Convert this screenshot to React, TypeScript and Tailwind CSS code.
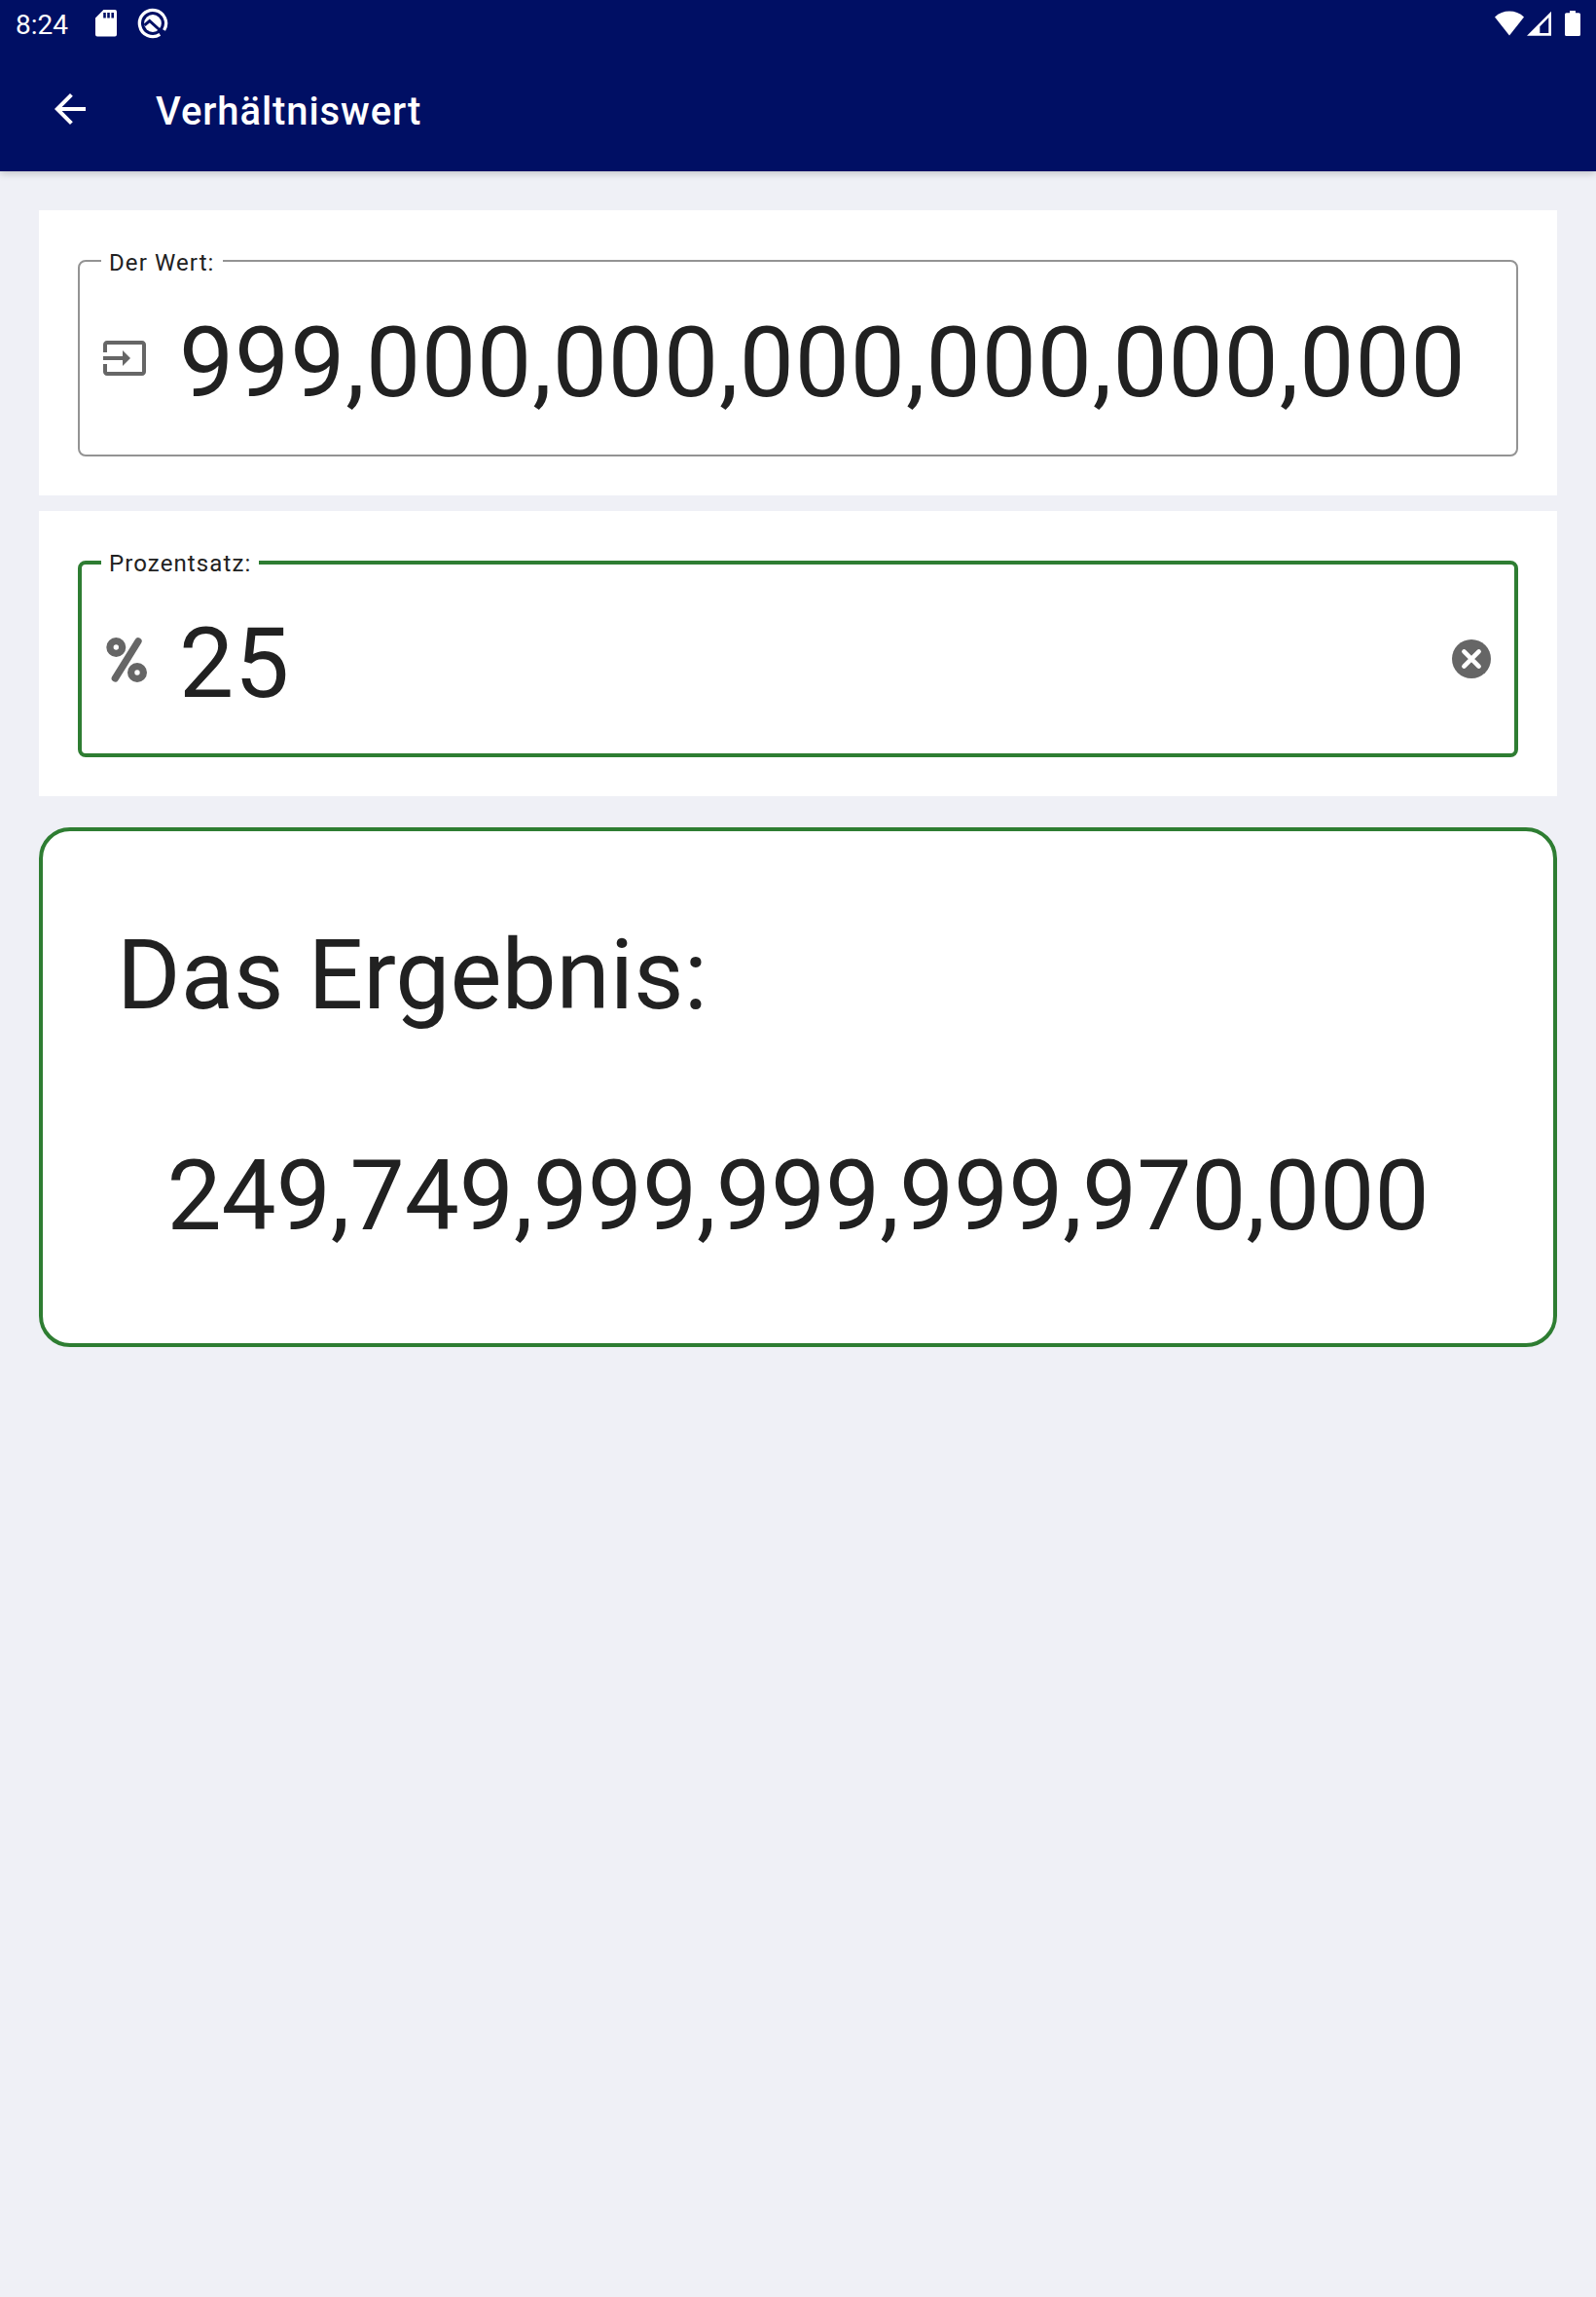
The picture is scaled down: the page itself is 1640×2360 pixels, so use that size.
import type { ReactNode } from "react";

function StatusBar() {
  return (
    <div className="flex h-12 items-center justify-between px-4 text-white">
      <div className="flex items-center">
        <span className="w-[82px] pt-0.5 text-[28px] leading-[33px]">8:24</span>
        <svg className="h-7 w-[22px]" viewBox="0 0 22 28" fill="currentColor">
          <path fillRule="evenodd" d="M8.4 0H20a2 2 0 0 1 2 2v23.6a2 2 0 0 1-2 2H2a2 2 0 0 1-2-2V8.4zM8.2 3v5.6h2.6V3zM12.2 3v5.6h2.6V3zM16.4 3v5.6h2.6V3z" />
        </svg>
        <svg className="ml-[21px] h-8 w-8" viewBox="0 0 32 32" fill="none">
          <path d="M23.300 27.400A13.600 13.600 0 1 1 27.600 23" stroke="currentColor" strokeWidth="3.300" />
          <circle cx="16" cy="16" r="8.900" fill="currentColor" />
          <path d="M7.500 17.800l5.200-4.300L25.500 25" stroke="#000f64" strokeWidth="3" />
        </svg>
      </div>
      <div className="flex items-center">
        <svg className="h-[26px] w-[30px]" viewBox="0 0 30 26" fill="currentColor">
          <path d="M0 6.4C4.2 2.6 9.4.6 15 .6s10.800 2 15 5.800L15 25.400z" />
        </svg>
        <svg className="ml-[3px] h-[26px] w-[25px]" viewBox="0 0 25 26" fill="currentColor">
          <path fillRule="evenodd" d="M25 .8v25H0zM22.300 7l-9 9.200V23h9z" />
        </svg>
        <svg className="ml-3.5 h-[26px] w-4" viewBox="0 0 16 26" fill="currentColor">
          <path d="M5 0h6v2.200h3.400A1.600 1.600 0 0 1 16 3.800V24.400a1.600 1.600 0 0 1-1.600 1.600H1.600A1.600 1.600 0 0 1 0 24.400V3.800a1.600 1.600 0 0 1 1.600-1.600H5z" />
        </svg>
      </div>
    </div>
  );
}

function InputIcon() {
  return (
    <svg className="size-12 shrink-0" viewBox="0 0 24 24" fill="#666666">
      <path d="M21 3.010H3c-1.100 0-2 .9-2 2V9h2V4.990h18v14.030H3V15H1v4.010c0 1.100.9 1.980 2 1.980h18c1.100 0 2-.88 2-1.980v-14c0-1.110-.9-2-2-2zM11 16l4-4-4-4v3H1v2h10v3z" />
    </svg>
  );
}

function PercentIcon() {
  return (
    <svg className="size-12 shrink-0" viewBox="0 0 48 48" fill="none" stroke="#666666" strokeWidth="7.300">
      <circle cx="15.300" cy="12" r="6.350" />
      <circle cx="37" cy="38" r="6.350" />
      <path d="M38 5.800L14.300 44" strokeLinecap="round" />
    </svg>
  );
}

function ClearIcon() {
  return (
    <svg className="size-12 shrink-0" viewBox="0 0 48 48">
      <circle cx="24" cy="24" r="20" fill="#666666" />
      <path d="M16.400 16.400l15.200 15.200M31.600 16.400L16.400 31.600" stroke="#ffffff" strokeWidth="4.600" strokeLinecap="round" />
    </svg>
  );
}

function FieldValue({ children }: { children: ReactNode }) {
  return (
    <span className="ml-8 mt-2.5 flex-1 whitespace-nowrap text-[100px] leading-[118px] tracking-[0.9px]">
      {children}
    </span>
  );
}

export default function App() {
  return (
    <div className="min-h-[2360px] bg-[#eff0f6] font-[Roboto,sans-serif] text-[#212121]">
      <header className="h-44 bg-[#000f64] shadow-[0_2px_8px_rgba(0,0,0,0.2)]">
        <StatusBar />
        <div className="flex h-32 items-center pl-12 text-white">
          <svg className="size-12" viewBox="0 0 24 24" fill="currentColor">
            <path d="M20 11H7.830l5.590-5.590L12 4l-8 8 8 8 1.410-1.410L7.830 13H20v-2z" />
          </svg>
          <h1 className="ml-16 mt-1 text-[40px] font-medium leading-[47px] tracking-[0.92px]">Verhältniswert</h1>
        </div>
      </header>

      <main className="px-10 pt-10">
        <section className="h-[293px] bg-white px-10 pt-[38px]">
          <fieldset className="h-[215px] rounded-lg border-2 border-[#939393] px-[22px]">
            <legend className="h-7 whitespace-nowrap px-2 text-2xl leading-8 tracking-[1.1px]">Der Wert:</legend>
            <div className="flex h-[172px] items-center">
              <InputIcon />
              <FieldValue>999,000,000,000,000,000,000</FieldValue>
            </div>
          </fieldset>
        </section>

        <section className="mt-4 h-[293px] bg-white px-10 pt-[39px]">
          <fieldset className="h-[214px] rounded-lg border-4 border-[#2e7d32] px-5">
            <legend className="h-7 whitespace-nowrap px-2 text-2xl leading-[30px] tracking-[1.1px]">Prozentsatz:</legend>
            <div className="flex h-[170px] items-center">
              <PercentIcon />
              <FieldValue>25</FieldValue>
              <ClearIcon />
            </div>
          </fieldset>
        </section>

        <section className="mt-8 h-[534px] rounded-[32px] border-4 border-[#2e7d32] bg-white px-19 pt-[89px]">
          <h2 className="text-[100px] leading-[118px]">Das Ergebnis:</h2>
          <p className="mt-[109px] text-center text-[100px] leading-[118px] tracking-[-0.04px]">249,749,999,999,999,970,000</p>
        </section>
      </main>
    </div>
  );
}
